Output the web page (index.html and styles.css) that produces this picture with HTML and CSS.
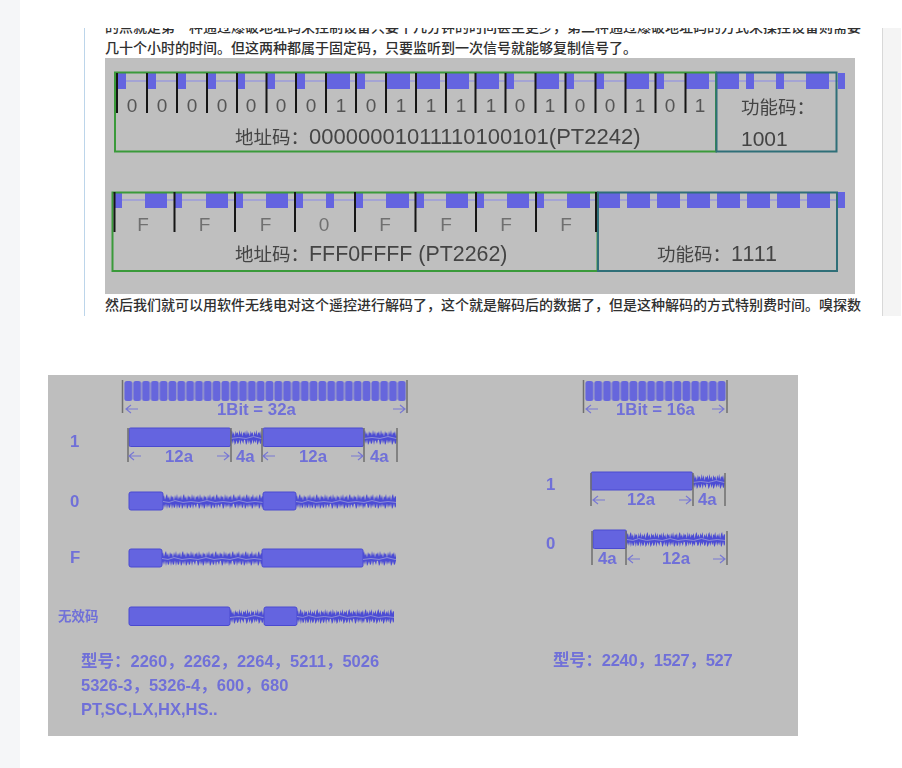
FILE: index.html
```html
<!DOCTYPE html>
<html lang="zh-CN">
<head>
<meta charset="utf-8">
<title>遥控解码</title>
<link rel="stylesheet" href="styles.css">
</head>
<body>
<div class="page">
  <aside class="rail"></aside>
  <main class="main">
    <section class="viewer">
      <article class="article">
        <p class="para">的点就是第一种通过爆破地址码来控制设备只要十几分钟的时间甚至更少，第二种通过爆破地址码的方式来操控设备则需要几十个小时的时间。但这两种都属于固定码，只要监听到一次信号就能够复制信号了。</p>
        <svg class="figure fig-top" width="750" height="236" viewBox="105 58 750 236" role="img" aria-label="地址码与功能码">
          <rect x="105" y="58" width="750" height="236" fill="#bfbfbf"/>
          <path class="thin" d="M117 81H845M114 200H845"/>
          <g class="wave">
            <rect x="117" y="73" width="9" height="16"/><rect x="147" y="73" width="9" height="16"/><rect x="177" y="73" width="9" height="16"/><rect x="207" y="73" width="9" height="16"/><rect x="237" y="73" width="8" height="16"/><rect x="267" y="73" width="8" height="16"/><rect x="297" y="73" width="8" height="16"/>
            <rect x="327" y="73" width="23" height="16"/><rect x="357" y="73" width="8" height="16"/><rect x="387" y="73" width="23" height="16"/><rect x="417" y="73" width="23" height="16"/><rect x="447" y="73" width="22" height="16"/><rect x="476" y="73" width="23" height="16"/>
            <rect x="506" y="73" width="8" height="16"/><rect x="536" y="73" width="23" height="16"/><rect x="566" y="73" width="8" height="16"/><rect x="596" y="73" width="8" height="16"/><rect x="626" y="73" width="23" height="16"/><rect x="656" y="73" width="8" height="16"/><rect x="686" y="73" width="23" height="16"/>
            <rect x="717" y="73" width="22" height="16"/><rect x="746" y="73" width="8" height="16"/><rect x="776" y="73" width="8" height="16"/><rect x="806" y="73" width="23" height="16"/><rect x="838" y="73" width="7" height="16"/>
          </g>
          <rect class="box-green" x="115" y="72.500" width="601" height="79"/>
          <rect class="box-teal" x="716.500" y="72.500" width="120" height="79"/>
          <path class="tick" d="M117 73V113M147 73V113M177 73V113M207 73V113M237 73V113M266.500 73V113M296 73V113M326 73V113M356 73V113M386 73V113M416 73V113M446 73V113M475.500 73V113M505.500 73V113M535.500 73V113M565.500 73V113M595.500 73V113M625.500 73V113M655.500 73V113M685.500 73V113"/>
          <g class="digit" text-anchor="middle">
            <text x="132" y="112">0</text><text x="162" y="112">0</text><text x="192" y="112">0</text><text x="222" y="112">0</text><text x="251" y="112">0</text><text x="281" y="112">0</text><text x="311" y="112">0</text><text x="341" y="112">1</text><text x="371" y="112">0</text><text x="401" y="112">1</text><text x="431" y="112">1</text><text x="461" y="112">1</text><text x="491" y="112">1</text><text x="520" y="112">0</text><text x="550" y="112">1</text><text x="580" y="112">0</text><text x="610" y="112">0</text><text x="640" y="112">1</text><text x="670" y="112">0</text><text x="700" y="112">1</text>
          </g>
          <text class="caption" x="235" y="144">地址码：<tspan class="latin">00000001011110100101(PT2242)</tspan></text>
          <text class="caption" x="741" y="114">功能码：</text>
          <text class="caption" x="741" y="146"><tspan class="latin narrow">1001</tspan></text>
          <g class="wave">
            <rect x="115" y="192" width="7" height="16"/><rect x="145" y="192" width="22" height="16"/><rect x="175" y="192" width="7" height="16"/><rect x="206" y="192" width="22" height="16"/><rect x="236" y="192" width="7" height="16"/><rect x="266" y="192" width="22" height="16"/><rect x="296" y="192" width="7" height="16"/><rect x="326" y="192" width="8" height="16"/>
            <rect x="356" y="192" width="7" height="16"/><rect x="386" y="192" width="23" height="16"/><rect x="416" y="192" width="8" height="16"/><rect x="446" y="192" width="22" height="16"/><rect x="476" y="192" width="8" height="16"/><rect x="507" y="192" width="22" height="16"/><rect x="537" y="192" width="7" height="16"/><rect x="567" y="192" width="23" height="16"/>
            <rect x="599" y="192" width="21" height="16"/><rect x="627" y="192" width="23" height="16"/><rect x="657" y="192" width="23" height="16"/><rect x="687" y="192" width="23" height="16"/><rect x="717" y="192" width="23" height="16"/><rect x="747" y="192" width="23" height="16"/><rect x="777" y="192" width="23" height="16"/><rect x="807" y="192" width="23" height="16"/><rect x="838" y="192" width="7" height="16"/>
          </g>
          <rect class="box-green" x="112.500" y="192.500" width="485" height="78.500"/>
          <rect class="box-teal" x="598" y="192.500" width="239" height="78.500"/>
          <path class="tick" d="M114.500 192V232M174.500 192V232M235 192V232M295 192V232M355 192V232M415.500 192V232M476 192V232M536 192V232M596 192V232"/>
          <g class="digit light" text-anchor="middle">
            <text x="143" y="231">F</text><text x="204.500" y="231">F</text><text x="265.500" y="231">F</text><text x="324" y="231">0</text><text x="385" y="231">F</text><text x="446" y="231">F</text><text x="506" y="231">F</text><text x="566" y="231">F</text>
          </g>
          <text class="caption" x="235" y="261">地址码：<tspan class="latin mid">FFF0FFFF (PT2262)</tspan></text>
          <text class="caption" x="657" y="261">功能码：<tspan class="latin spaced">1111</tspan></text>
        </svg>
        <p class="para">然后我们就可以用软件无线电对这个遥控进行解码了，这个就是解码后的数据了，但是这种解码的方式特别费时间。嗅探数</p>
      </article>
      <div class="scroll"></div>
    </section>
    <svg class="figure fig-bottom" width="750" height="361" viewBox="48 375 750 361" role="img" aria-label="编码波形">
      <defs>
        <pattern id="comb" x="124" y="381" width="8.820" height="20" patternUnits="userSpaceOnUse">
          <rect x="0.400" y="0" width="7.900" height="20" rx="2.500"/>
        </pattern>
        <pattern id="combb" x="585" y="381" width="8.820" height="20" patternUnits="userSpaceOnUse">
          <rect x="0.400" y="0" width="7.900" height="20" rx="2.500"/>
        </pattern>
        <g id="noise-shape">
          <path d="M0 8 L0 3 1 1 2 6 3 2 4 0 5 5 6 2 7 7 8 1 9 4 10 2 11 7 12 1 13 5 14 0 15 6 16 2 17 5 18 1 19 7 20 2 21 0 22 5 23 2 24 7 25 1 26 4 27 2 28 6 29 0 30 5 31 1 32 7 33 2 34 4 35 1 36 6 37 0 38 5 39 2 40 7 41 1 42 4 43 2 44 7 45 1 46 5 47 0 48 6 49 2 50 4 51 1 52 7 53 2 54 0 55 5 56 2 57 6 58 1 59 4 60 2 61 7 62 0 63 5 64 1 65 6 66 2 67 4 68 1 69 7 70 2 71 0 72 5 73 2 74 6 75 1 76 4 77 0 78 7 79 2 80 5 81 1 82 6 83 2 84 0 85 5 86 1 87 7 88 2 89 4 90 0 91 6 92 2 93 5 94 1 95 7 96 2 97 0 98 5 99 2 100 3 L100 13 99 15 98 10 97 14 96 16 95 10 94 14 93 11 92 15 91 10 90 14 89 16 88 11 87 14 86 10 85 15 84 11 83 14 82 16 81 10 80 14 79 15 78 10 77 14 76 11 75 16 74 10 73 14 72 15 71 11 70 10 69 15 68 12 67 16 66 10 65 14 64 11 63 15 62 10 61 14 60 16 59 11 58 10 57 15 56 12 55 11 54 16 53 10 52 14 51 15 50 11 49 14 48 16 47 10 46 14 45 11 44 15 43 10 42 14 41 16 40 11 39 15 38 10 37 14 36 16 35 11 34 10 33 15 32 12 31 11 30 16 29 10 28 14 27 15 26 11 25 14 24 16 23 10 22 15 21 11 20 14 19 16 18 10 17 14 16 15 15 11 14 16 13 10 12 14 11 15 10 11 9 16 8 10 7 14 6 15 5 11 4 16 3 10 2 15 1 11 0 14Z"/>
          <path class="streak" d="M0 8 6 9 12 7 20 9 28 8 36 9 44 7 52 9 60 8 68 9 76 7 84 9 92 8 100 9"/>
        </g>
        <symbol id="noise-long" viewBox="0 0 100 16" preserveAspectRatio="none"><use href="#noise-shape"/></symbol>
        <symbol id="noise-short" viewBox="20 0 33 16" preserveAspectRatio="none"><use href="#noise-shape"/></symbol>
        <g id="arrow-l"><path d="M12 0H0M5 -4L0 0L5 4"/></g>
        <g id="arrow-r"><path d="M-12 0H0M-5 -4L0 0L-5 4"/></g>
      </defs>
      <rect x="48" y="375" width="750" height="361" fill="#bebebe"/>

      <rect x="124" y="381" width="282" height="20" fill="url(#comb)"/>
      <path class="gray" d="M122.500 380V413M407 380V413"/>
      <g class="arr">
        <use href="#arrow-l" x="126" y="409"/><use href="#arrow-r" x="405" y="409"/>
      </g>
      <text class="lab" x="217" y="415">1Bit = 32a</text>

      <text class="lab" x="70" y="447">1</text>
      <rect class="bar" x="129" y="428" width="101.500" height="18.500" rx="1.500"/>
      <use class="nz" href="#noise-short" x="231" y="430" width="31" height="15"/>
      <rect class="bar" x="263" y="428" width="100.500" height="18.500" rx="1.500"/>
      <use class="nz" href="#noise-short" x="364" y="430" width="33" height="15"/>
      <path class="gray" d="M128 428V462M231 428V462M262 428V462M364 428V462M397 428V462"/>
      <g class="arr">
        <use href="#arrow-l" x="129" y="456"/><use href="#arrow-r" x="229" y="456"/><use href="#arrow-l" x="263" y="456"/><use href="#arrow-r" x="363" y="456"/>
      </g>
      <text class="lab" x="165" y="462">12a</text><text class="lab" x="236" y="462">4a</text><text class="lab" x="299" y="462">12a</text><text class="lab" x="370" y="462">4a</text>

      <text class="lab" x="70" y="507">0</text>
      <rect class="bar" x="129" y="492" width="34" height="18" rx="2"/>
      <use class="nz" href="#noise-long" x="163" y="494" width="100" height="15"/>
      <rect class="bar" x="263" y="492" width="33" height="18" rx="2"/>
      <use class="nz" href="#noise-long" x="296" y="494" width="100" height="15"/>

      <text class="lab" x="70" y="563">F</text>
      <rect class="bar" x="129" y="549" width="33" height="18" rx="2"/>
      <use class="nz" href="#noise-long" x="162" y="551" width="100" height="15"/>
      <rect class="bar" x="262" y="549" width="101" height="18" rx="1.500"/>
      <use class="nz" href="#noise-short" x="363" y="551" width="33" height="15"/>

      <text class="lab small" x="58" y="621">无效码</text>
      <rect class="bar" x="129" y="607" width="101" height="18.500" rx="2"/>
      <use class="nz" href="#noise-short" x="230" y="609" width="34" height="15"/>
      <rect class="bar" x="264" y="607" width="33" height="18.500" rx="2"/>
      <use class="nz" href="#noise-long" x="297" y="609" width="97" height="15"/>

      <text class="lab big" x="81" y="667">型号：2260，2262，2264，5211，5026</text>
      <text class="lab big" x="81" y="691">5326-3，5326-4，600，680</text>
      <text class="lab big" x="81" y="715">PT,SC,LX,HX,HS..</text>

      <rect x="585" y="381" width="141" height="20" fill="url(#combb)"/>
      <path class="gray" d="M583.500 380V413M727 380V413"/>
      <g class="arr">
        <use href="#arrow-l" x="586" y="409"/><use href="#arrow-r" x="724" y="409"/>
      </g>
      <text class="lab" x="616" y="415">1Bit = 16a</text>

      <text class="lab" x="546" y="490">1</text>
      <rect class="bar" x="591" y="472" width="101.500" height="18" rx="1.500"/>
      <use class="nz" href="#noise-short" x="693" y="474" width="32" height="15"/>
      <path class="gray" d="M591 473V506M693 473V506M725 473V506"/>
      <g class="arr">
        <use href="#arrow-l" x="593" y="500"/><use href="#arrow-r" x="691" y="500"/>
      </g>
      <text class="lab" x="627" y="505">12a</text><text class="lab" x="698" y="505">4a</text>

      <text class="lab" x="546" y="549">0</text>
      <rect class="bar" x="593" y="530" width="33.500" height="18.500" rx="1.500"/>
      <use class="nz" href="#noise-long" x="627" y="532" width="98" height="15"/>
      <path class="gray" d="M592 531V565M626 531V565M727 531V565"/>
      <g class="arr">
        <use href="#arrow-l" x="628" y="559"/><use href="#arrow-r" x="725" y="559"/>
      </g>
      <text class="lab" x="598" y="564">4a</text><text class="lab" x="662" y="564">12a</text>

      <text class="lab big tight" x="553" y="666">型号：2240，1527，527</text>
    </svg>
  </main>
</div>
</body>
</html>
```
FILE: styles.css
```css
* { box-sizing: border-box; }
html, body { margin: 0; padding: 0; background: #fff; }
body { height: 768px; overflow: hidden; }

.page { display: flex; height: 768px; }
.rail { width: 20px; flex: none; background: #f5f6f8; }
.main { flex: 1; min-width: 0; }

.viewer {
  display: flex;
  height: 288px;
  margin: 28px 1px 0 64px;
}
.article {
  flex: 1;
  min-width: 0;
  overflow: hidden;
  border-left: 1px solid #bcd5ea;
  padding: 0 0 0 20px;
}
.scroll {
  width: 19px;
  flex: none;
  background: #f4f4f4;
  border-left: 1px solid #d8d8d8;
}
.para {
  width: 756px;
  margin: 0;
  font: 500 14px/21px "Noto Sans CJK SC", "Liberation Sans", sans-serif;
  color: #2f2f2f;
}
.para:first-child { margin-top: -12px; }

.figure { display: block; }
.fig-bottom { margin: 59px 0 0 28px; }

/* top figure */
.fig-top { filter: blur(0.35px); }
.thin { stroke: #9c9cdc; stroke-width: 1.5; fill: none; }
.wave rect { fill: #6464e0; }
.box-green { fill: none; stroke: #3a9a3a; stroke-width: 2; }
.box-teal { fill: none; stroke: #2f6f78; stroke-width: 2; }
.tick { stroke: #161616; stroke-width: 2; fill: none; }
.digit text { font: 19px "Liberation Sans", sans-serif; fill: #555; }
.digit.light text { fill: #707070; }
.caption { font: 18.500px "Noto Sans CJK SC", "Liberation Sans", sans-serif; fill: #444; }
.latin { font: 22px "Liberation Sans", sans-serif; }
.latin.narrow { font-size: 21px; }
.latin.mid { font-size: 21.400px; }
.latin.spaced { font-size: 21.500px; letter-spacing: 1px; }

/* bottom figure */
.fig-bottom { filter: blur(0.6px); }
.fig-bottom pattern rect { fill: #6666dc; }
.bar { fill: #6464e0; stroke: #4a4ad0; stroke-width: 1; }
.nz { fill: #4c4cd4; }
.streak { fill: none; stroke: #9090d8; stroke-width: 1; }
.gray { stroke: #6f6f6f; stroke-width: 1.500; fill: none; }
.arr { stroke: #7878d4; stroke-width: 1.200; fill: none; }
.lab { font: 700 16.800px "Liberation Sans", "Noto Sans CJK SC", sans-serif; fill: #7070d8; }
.lab.small { font-size: 13.500px; }
.lab.big { font-size: 16.500px; }
.lab.tight { letter-spacing: -0.250px; }
```
